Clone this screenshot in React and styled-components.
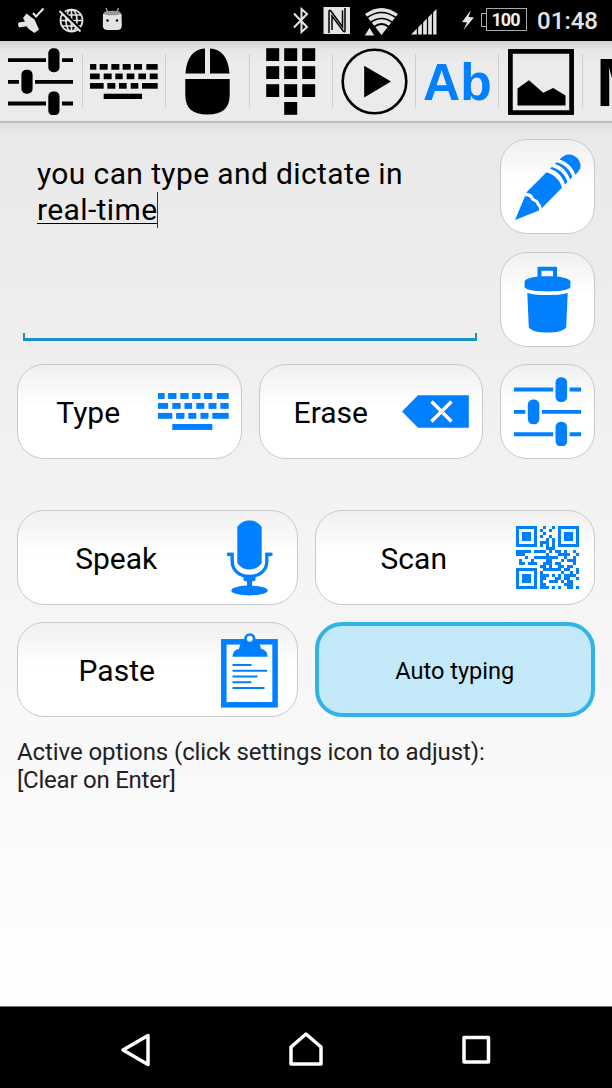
import styled, { createGlobalStyle } from "styled-components";

const GlobalStyle = createGlobalStyle`
  * {
    box-sizing: border-box;
  }
  body {
    margin: 0;
    background: #000;
    font-family: Roboto, "Noto Sans", sans-serif;
  }
`;
const Screen = styled.div`
  display: flex;
  flex-direction: column;
  width: 612px;
  height: 1088px;
  overflow: hidden;
`;
const StatusBar = styled.header`
  display: flex;
  justify-content: space-between;
  height: 41px;
  padding: 0 14px 0 17px;
  background: #000;
  color: #e4e4e4;
`;
const StatusGroup = styled.div`
  display: flex;
  svg {
    display: block;
    flex: none;
  }
`;
const Clock = styled.span`
  width: 61px;
  margin-left: 10px;
  font-size: 24px;
  line-height: 43px;
  font-weight: 500;
  text-align: right;
  white-space: nowrap;
`;
const TabBar = styled.nav`
  display: flex;
  height: 82px;
  background: linear-gradient(#d2d2d2, #e6e6e6 9px, #ebebeb 20px, #ebebeb);
  border-bottom: 2px solid #bdbdbd;
  overflow: hidden;
`;
const Tab = styled.button`
  display: flex;
  flex: none;
  align-items: center;
  justify-content: ${(props) => (props.$cut ? "flex-start" : "center")};
  width: 83.3px;
  padding: ${(props) => (props.$cut ? "2px 0 0 13px" : "1px 1.4px 0 0")};
  border: 0;
  background: linear-gradient(#cfcfcf, #cfcfcf) right 13px / 1.4px 54px no-repeat;
  color: ${(props) => (props.$active ? "#007fff" : "#000")};
  font: bold ${(props) => (props.$cut ? 68 : 51.5)}px/78px "Liberation Sans", sans-serif;
`;
const Content = styled.main`
  display: flex;
  flex: 1;
  flex-direction: column;
  padding: 16px 17px 0;
  background: linear-gradient(#dedede, #e9e9e9 12px, #f1f1f1 310px, #f9f9f9 650px, #fff);
`;
const TopGrid = styled.div`
  display: grid;
  grid-template-columns: 224.5px 224.5px 95px;
  grid-template-rows: 95.5px 95.5px 95px;
  gap: 17px;
`;
const Editor = styled.div`
  display: flex;
  grid-column: 1 / 3;
  grid-row: 1 / 3;
  margin: 0 6px 6px;
  padding: 17px 14px;
  background:
    linear-gradient(#1c90c8, #1c90c8) left bottom / 100% 3px no-repeat,
    linear-gradient(#1c90c8, #1c90c8) left bottom / 2px 8px no-repeat,
    linear-gradient(#1c90c8, #1c90c8) right bottom / 2px 8px no-repeat;
`;
const EditorText = styled.p`
  width: 400px;
  margin: 0;
  font-size: 30px;
  line-height: 36px;
  letter-spacing: 0.38px;
`;
const Composing = styled.span`
  display: inline-block;
  height: 32px;
  border-bottom: 1.5px solid #000;
`;
const Caret = styled.span`
  display: inline-block;
  width: 1px;
  height: 36px;
  vertical-align: -8px;
  background: #333;
`;
const Button = styled.button`
  display: flex;
  align-items: center;
  justify-content: center;
  height: 95px;
  padding: 0 ${(props) => props.$end || 0}px 0 0;
  border: 1px solid #c9c9c9;
  border-radius: 27px;
  background: linear-gradient(#f0f0f0, #fff 45%);
  color: #007fff;
  svg {
    display: block;
    flex: none;
  }
`;
const Label = styled.span`
  flex: 1;
  padding: 2px ${(props) => props.$end || 0}px 0 0;
  color: #000;
  font: 30px Roboto, sans-serif;
  text-align: center;
`;
const ToggleButton = styled(Button)`
  padding-top: 2px;
  border: 4px solid #30b3e5;
  background: #c3e9f8;
  color: #000;
  font: 23.6px Roboto, sans-serif;
`;
const ActionGrid = styled.div`
  display: grid;
  grid-template-columns: 280.5px 280.5px;
  gap: 17px;
  margin-top: 51px;
`;
const Options = styled.div`
  margin-top: 21px;
  color: #222;
  font-size: 24px;
  line-height: 28.2px;
`;
const OptionLine = styled.p`
  margin: 0;
  letter-spacing: ${(props) => (props.$tight ? -0.24 : -0.08)}px;
`;
const NavBar = styled.footer`
  display: flex;
  justify-content: center;
  height: 82px;
  border-top: 1px solid #777;
  background: #000;
`;
const NavKey = styled.button`
  display: flex;
  align-items: center;
  justify-content: center;
  width: 170px;
  padding: 5px 0 0;
  border: 0;
  background: none;
  color: #fff;
`;

function Sliders({ width }) {
  return (
    <svg width={width} height={width * 1.04} viewBox="0 0 65 67.6" preserveAspectRatio="none" fill="currentColor">
      <path d="M0 10.2h38v3.8H0zM54 10.2h11v3.8H54zM0 31.9h11v3.8H0zM27 31.9h38v3.8H27zM0 53.6h38v3.8H0zM54 53.6h11v3.8H54z" />
      <rect x="40.3" y="0.3" width="11.2" height="24" rx="5" />
      <rect x="13.4" y="21.8" width="11.2" height="24" rx="5" />
      <rect x="40.3" y="43.4" width="11.2" height="24" rx="5" />
    </svg>
  );
}

const KEY_ROWS = [
  [0, [0, 19], [29, 53], [64, 88], [98, 122], [132, 156], [169, 203]],
  [28.5, [0, 29], [41, 65], [76, 98], [110, 133], [145, 168], [179, 203]],
  [57, [0, 41], [52, 76], [87, 110], [122, 145], [156, 203]],
  [89, [41, 156]],
];

function Keyboard({ width }) {
  return (
    <svg width={width} height={width * 0.523} viewBox="0 0 203 106" fill="currentColor">
      {KEY_ROWS.map(([y, ...keys]) =>
        keys.map(([from, to]) => <rect key={`${y}-${from}`} x={from} y={y} width={to - from} height="17" />)
      )}
    </svg>
  );
}

function Mouse() {
  return (
    <svg width="45" height="67" viewBox="0 0 45 67">
      <path d="M.5 25.5C1.5 9 9 .8 20 .5v25zM25 .5C36 .8 43.5 9 44.5 25.5H25zM.3 31h44.4v16c0 13-7 19.5-22.2 19.5S.3 60 .3 47z" />
    </svg>
  );
}

function Keypad() {
  return (
    <svg width="50" height="67" viewBox="0 0 50 67">
      {[0, 18, 36].map((y) => [0, 18, 36].map((x) => <rect key={`${x}-${y}`} x={x + 0.2} y={y + 0.2} width="13" height="12.8" />))}
      <rect x="18.2" y="54" width="13" height="12.8" />
    </svg>
  );
}

function Play() {
  return (
    <svg width="67" height="67" viewBox="0 0 67 67">
      <circle cx="33.5" cy="33.5" r="31.8" fill="none" stroke="#000" strokeWidth="2.6" />
      <path d="M23.2 17.8 50 33.5 23.2 49.6z" />
    </svg>
  );
}

function Picture() {
  return (
    <svg width="66" height="66" viewBox="0 0 66 66">
      <rect x="2.4" y="2.4" width="61.2" height="61.2" fill="none" stroke="#000" strokeWidth="4.7" />
      <path d="M9.5 39.5 21 31.3l14.2 12.4 10-4.7 12.3 7.5v10h-48z" />
    </svg>
  );
}

function Pencil() {
  return (
    <svg width="68" height="68" viewBox="0 0 68 68" fill="currentColor">
      <path d="M1 67 11 43.2c2-.2 3.8.3 5.3 1.7.5 1.7 1.4 2.8 3.1 3.3 1.8.6 3 2 3.500 4 1.700 1.400 2.400 3 2.100 5.200z" />
      <path d="M12 39.8 32.5 19.3C40 21.5 46 27 48 34.8L27.5 55.5c.2-2.2-.5-3.8-2.1-5.1-.6-2.4-2-3.8-4.2-4.5-1.4-.6-2.4-1.6-2.7-3.3-1.7-1.8-3.8-2.8-6.5-2.8z" />
      <path d="m36 15.8 1.800-1.800c7.800 2.200 13.500 7.500 15.600 15L51 31.500C48.700 24 43.500 18 36 15.800zM41 11l1.800-1.800c7.800 2.200 13.300 7.300 15.400 14.800L56 26.500C53.700 19 48.500 13.200 41 11zM45.500 6.500C48.500 3.500 51 1.500 55 1.500c6.500.3 11.500 5.500 11.500 11.500 0 3.500-2.500 6-5.200 8.700C59 14.500 53 8.700 45.500 6.500z" />
    </svg>
  );
}

function Trash() {
  return (
    <svg width="47" height="67" viewBox="0 0 47 67" fill="currentColor">
      <path d="M13.5 11V1.8Q13.5.8 14.5.8h17.500Q33 .8 33 1.800V11h-4V4.800H17.500V11z" />
      <path d="M.6 15c3-3.5 11.500-4.700 22.900-4.700S43.400 11.500 46.400 15v6.500c-3 3-11.500 3.900-22.900 3.900S3.600 24.500.6 21.500zM3.300 27c6 1.600 12 2.100 20.200 2.100s14.200-.5 20.200-2.100l-1.500 34.500c-3 3.700-10 5-18.700 5s-15.700-1.300-18.700-5z" />
    </svg>
  );
}

function Backspace() {
  return (
    <svg width="67" height="33" viewBox="0 0 67 33">
      <path d="M0 16.5 16 .2h50.800v32.600H16z" fill="currentColor" />
      <path d="m29.5 6.5 20 20m0-20-20 20" stroke="#fff" strokeWidth="3.4" />
    </svg>
  );
}

function Microphone() {
  return (
    <svg width="67" height="76" viewBox="0 0 67 76" fill="currentColor">
      <path d="M21.3 7C24.5 2.5 28.5.5 33.5.5S42.5 2.5 45.7 7v36c-3.2 4.5-7.2 6.5-12.2 6.5S24.5 47.5 21.3 43z" />
      <path d="M12 34.5h4.2v7c0 9.500 8 15 17.300 15s17.300-5.500 17.300-15v-7H55" fill="none" stroke="currentColor" strokeWidth="3.3" />
      <path d="M11 32.8h6v3h-6zM50 32.8h6.500v3H50zM27.500 55h12v5.500l-3.500 1v5h-5v-5l-3.500-1z" />
      <ellipse cx="33.5" cy="70.5" rx="18.2" ry="4.9" />
    </svg>
  );
}

function Clipboard() {
  return (
    <svg width="67" height="76" viewBox="0 0 67 76" fill="currentColor">
      <rect x="7.8" y="9.8" width="51.3" height="63" fill="none" stroke="currentColor" strokeWidth="5.5" />
      <path d="M16.5 24.800C17 19.800 19 17.800 23 16.800l2-7h18l2 7c4 1 6.500 3 6.500 8z" />
      <circle cx="33.8" cy="6.8" r="4.3" fill="#fafafa" stroke="currentColor" strokeWidth="2.7" />
      <path d="M16.5 33h19M16.500 38.800H51M16.500 44.500h25M16.500 50.300h19M16.500 56h32" stroke="currentColor" strokeWidth="1.9" />
    </svg>
  );
}

const QR_ROWS = [
  "1111111..1..1.1111111",
  "1.....1.1..1..1.....1",
  "1.111.1..1....1.111.1",
  "1.111.1.1..1..1.111.1",
  "1.111.1...1.1.1.111.1",
  "1.....1.111.1.1.....1",
  "1111111.1.1.1.1111111",
  "..........111........",
  "11111.1111.1.11.1..1.",
  "111.......1...1111..1",
  "...1..11111111..1..1.",
  ".1...1....11...1.111.",
  ".11.111..111.11....1.",
  "........11.1..11.11..",
  "1111111..111111.11..1",
  "1.....1.1......1..1.1",
  "1.111.1.111.1.1.1111.",
  "1.111.1.11...11.11..1",
  "1.111.1.1..111.1.11..",
  "1.....1.11......111..",
  "1111111.111.1.1..11.1",
];

function QrCode() {
  return (
    <svg width="63" height="63" viewBox="0 0 21 21" fill="currentColor" shapeRendering="crispEdges">
      {QR_ROWS.map((row, y) =>
        [...row].map((cell, x) => cell === "1" && <rect key={`${x}-${y}`} x={x} y={y} width="1" height="1" />)
      )}
    </svg>
  );
}

function NoticeIcons() {
  return (
    <svg width="108" height="41" viewBox="17 0 108 41" fill="#e4e4e4">
      <path d="m18.5 22.500 6.500-1-2-3.500 3.500-4.500 4.500 3.500 3.500 2.500 4.500 10-4.500 3.500-5.500-3.800-2.500-3-7 1.300c-1.500-1-1.700-3-1-5z" />
      <path d="m33 13 3 3.500L43.500 8.500" fill="none" stroke="#e4e4e4" strokeWidth="2" />
      <g fill="none" stroke="#e4e4e4" strokeWidth="1.7">
        <circle cx="71.5" cy="20.5" r="11" />
        <ellipse cx="71.5" cy="20.5" rx="5.5" ry="11" />
        <path d="M60.5 20.5h22M62.500 15h18M62.500 26h18M71.500 9.500v22" />
        <path d="m61.5 10.500 20 20" stroke="#000" strokeWidth="3" />
        <path d="m59.5 11 21 20.500" strokeWidth="2" />
      </g>
      <path d="M103 13.5c2.500 1.500 16 1.500 18.500 0l.3 12q0 4.500-4.800 4.500h-9.300q-4.900 0-4.900-4.500z" />
      <ellipse cx="112.3" cy="13" rx="8.5" ry="2.3" fill="#999" />
      <path d="m106 8 1.500 3.500M118.500 8 117 11.500" stroke="#aaa" strokeWidth="1.3" />
      <circle cx="107.5" cy="20.5" r="1.2" fill="#000" />
      <circle cx="117" cy="20.5" r="1.2" fill="#000" />
    </svg>
  );
}

function SignalIcons() {
  return (
    <svg width="187" height="41" viewBox="292 0 187 41" fill="#e4e4e4">
      <path d="m294 13.5 13 13.500-5.500 5V9l5.500 5-13 13.500" fill="none" stroke="#e4e4e4" strokeWidth="2" />
      <path d="M323.5 7h26.500v27h-26.500z" />
      <path d="M329 33V11.500q0-2 2-.5l11.500 16V10.500M332 30V16l11.500 15.500q1.500 1 1.500-1V8" fill="none" stroke="#000" strokeWidth="1.5" />
      <path d="M365 14q16.500-12 33 0L381.500 35z" />
      <path d="M366.5 18q15-11 30 0M370.500 22.500q11-8 22 0M374 27q7.500-6 15 0" fill="none" stroke="#000" strokeWidth="1.7" />
      <path d="m364 36 5.500-9 5.500 9z" stroke="#000" />
      <path d="M411 34.5 436.500 9v25.500z" />
      <path d="M417.5 27v8M422.500 22v13M427.500 17v18M432.500 12v23" stroke="#000" strokeWidth="1.3" />
      <path d="m471 10-9 12 5 .5-3.500 7.500L474 17.500l-5.500-.5z" />
    </svg>
  );
}

const Battery = styled.div`
  display: flex;
  align-items: center;
  margin-left: 2px;
  &::before {
    content: "";
    width: 4px;
    height: 12px;
    margin-top: -2px;
    border: 1px solid #aaa;
    border-right: 0;
  }
`;
const BatteryLevel = styled.span`
  width: 41px;
  height: 23px;
  margin-top: -2px;
  border: 1px solid #aaa;
  font-size: 18px;
  font-weight: 700;
  line-height: 22px;
  letter-spacing: -1px;
  text-indent: -2px;
  text-align: center;
  color: #eee;
`;

export default function App() {
  return (
    <Screen>
      <GlobalStyle />
      <StatusBar>
        <StatusGroup>
          <NoticeIcons />
        </StatusGroup>
        <StatusGroup>
          <SignalIcons />
          <Battery>
            <BatteryLevel>100</BatteryLevel>
          </Battery>
          <Clock>01:48</Clock>
        </StatusGroup>
      </StatusBar>
      <TabBar>
        <Tab><Sliders width={65} /></Tab>
        <Tab><Keyboard width={67.7} /></Tab>
        <Tab><Mouse /></Tab>
        <Tab><Keypad /></Tab>
        <Tab><Play /></Tab>
        <Tab $active>Ab</Tab>
        <Tab><Picture /></Tab>
        <Tab $cut>M</Tab>
      </TabBar>
      <Content>
        <TopGrid>
          <Editor>
            <EditorText>
              you can type and dictate in <Composing>real-time</Composing>
              <Caret />
            </EditorText>
          </Editor>
          <Button><Pencil /></Button>
          <Button><Trash /></Button>
          <Button $end={11.4}>
            <Label>Type</Label>
            <Keyboard width={70.7} />
          </Button>
          <Button $end={13}>
            <Label>Erase</Label>
            <Backspace />
          </Button>
          <Button $end={1}><Sliders width={67} /></Button>
        </TopGrid>
        <ActionGrid>
          <Button $end={14}>
            <Label $end={1}>Speak</Label>
            <Microphone />
          </Button>
          <Button $end={15}>
            <Label $end={4}>Scan</Label>
            <QrCode />
          </Button>
          <Button $end={14}>
            <Label>Paste</Label>
            <Clipboard />
          </Button>
          <ToggleButton>Auto typing</ToggleButton>
        </ActionGrid>
        <Options>
          <OptionLine>Active options (click settings icon to adjust):</OptionLine>
          <OptionLine $tight>[Clear on Enter]</OptionLine>
        </Options>
      </Content>
      <NavBar>
        <NavKey>
          <svg width="34" height="34" viewBox="0 0 34 34" fill="none" stroke="currentColor" strokeWidth="3.5" strokeLinejoin="round">
            <path d="M4 17 29 2.5v29z" />
          </svg>
        </NavKey>
        <NavKey>
          <svg width="36" height="36" viewBox="0 0 36 36" fill="none" stroke="currentColor" strokeWidth="3.5" strokeLinejoin="round">
            <path d="M3 32V15L18 2l15 13v17z" />
          </svg>
        </NavKey>
        <NavKey>
          <svg width="30" height="30" viewBox="0 0 30 30" fill="none" stroke="currentColor" strokeWidth="3.5" strokeLinejoin="round">
            <path d="M3 2.5h24.500v24.500H3z" />
          </svg>
        </NavKey>
      </NavBar>
    </Screen>
  );
}
